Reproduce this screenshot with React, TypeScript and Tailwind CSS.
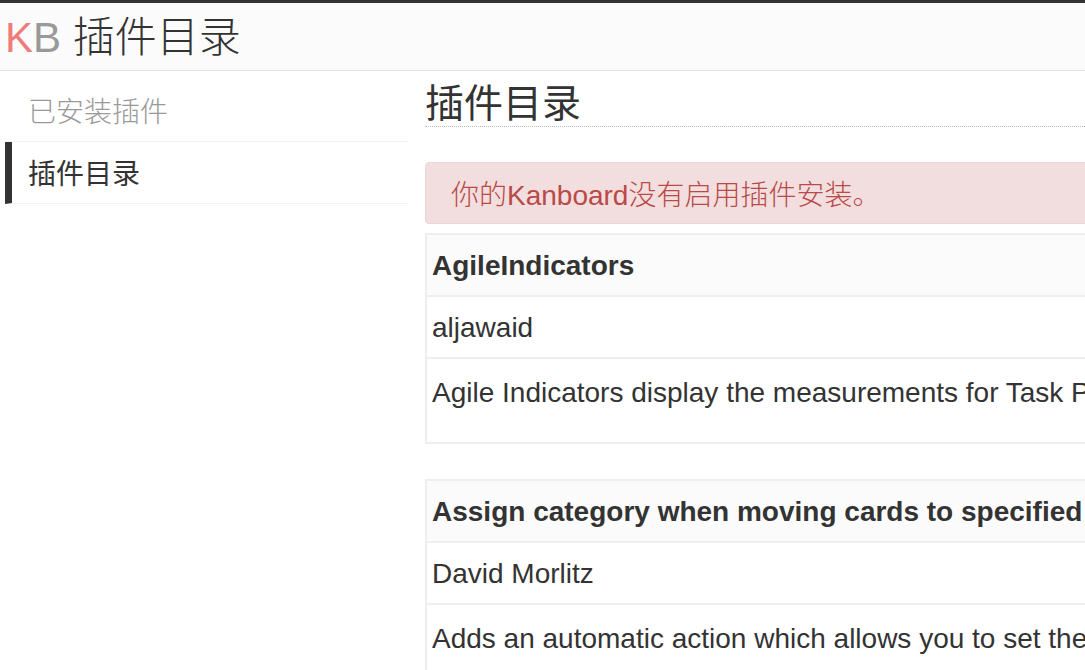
import React from 'react';

// Kanboard plugin directory, viewed at 200% zoom

interface Plugin {
  title: string;
  author: string;
  description: string;
}

const PLUGINS: Plugin[] = [
  {
    title: 'AgileIndicators',
    author: 'aljawaid',
    description:
      'Agile Indicators display the measurements for Task Points, Velocity and Progress across your projects and boards',
  },
  {
    title: 'Assign category when moving cards to specified column',
    author: 'David Morlitz',
    description:
      'Adds an automatic action which allows you to set the category of a task when it is moved to a specific column',
  },
];

const SIDEBAR = [
  { label: '已安装插件', active: false },
  { label: '插件目录', active: true },
];

const FONT = "font-['Liberation_Sans','Noto_Sans_CJK_SC',sans-serif]";

const PluginTable: React.FC<{ plugin: Plugin }> = ({ plugin }) => (
  <div className="border-l-2 border-t-2 border-[#eeeeee] mb-[35px]">
    <div className="bg-[#fbfbfb] border-b-2 border-[#eeeeee] pl-[5px] pt-[15px] pb-[13px] leading-[32px] font-bold whitespace-nowrap">
      {plugin.title}
    </div>
    <div className="border-b-2 border-[#eeeeee] pl-[5px] pt-[15px] pb-[13px] leading-[32px] whitespace-nowrap">
      {plugin.author}
    </div>
    <div className="border-b-2 border-[#eeeeee] pl-[5px] pt-[18px] pb-[33px] leading-[32px] whitespace-nowrap">
      {plugin.description}
    </div>
  </div>
);

export default function App() {
  return (
    <div className={`w-[1085px] h-[670px] overflow-hidden bg-white text-[#333333] ${FONT}`}>
      <div className="h-[3px] bg-[#333333]" />

      <header className="h-[68px] bg-[#fbfbfb] border-b border-[#e0e0e0] flex items-center pl-[5px] pt-[2px]">
        <div className="text-[42px] leading-[48px] font-light whitespace-nowrap">
          <span className="text-[#ef7b7b]">K</span>
          <span className="text-[#999999]">B</span>{' '}
          <span className="text-[#333333]">插件目录</span>
        </div>
      </header>

      <div className="flex">
        <aside className="w-[403px] shrink-0 ml-[5px] pt-[9px]">
          <ul>
            {SIDEBAR.map((item) => (
              <li
                key={item.label}
                className={
                  item.active
                    ? 'h-[62px] flex items-center border-l-[7px] border-l-[#333333] border-b border-b-[#f2f2f2] pl-[16px] pt-[5px] text-[28px] text-[#333333]'
                    : 'h-[62px] flex items-center border-l-[7px] border-l-transparent border-b border-b-[#f2f2f2] pl-[16px] pt-[5px] text-[28px] text-[#999999] font-light'
                }
              >
                {item.label}
              </li>
            ))}
          </ul>
        </aside>

        <main className="w-[1500px] shrink-0 ml-[17px] pt-[9px] text-[28px]">
          <div className="border-b border-dotted border-[#bbbbbb]">
            <h2 className="text-[39px] leading-[44px] pt-[2px] font-normal">插件目录</h2>
          </div>

          <div className="mt-[35px] rounded-[4px] border border-[#eed3d7] bg-[#f2dede] text-[#b94a48] pl-[25px] pt-[17px] pb-[11px] leading-[32px] font-light">
            你的Kanboard没有启用插件安装。
          </div>

          <div className="mt-[9px]">
            {PLUGINS.map((p) => (
              <PluginTable key={p.title} plugin={p} />
            ))}
          </div>
        </main>
      </div>
    </div>
  );
}
